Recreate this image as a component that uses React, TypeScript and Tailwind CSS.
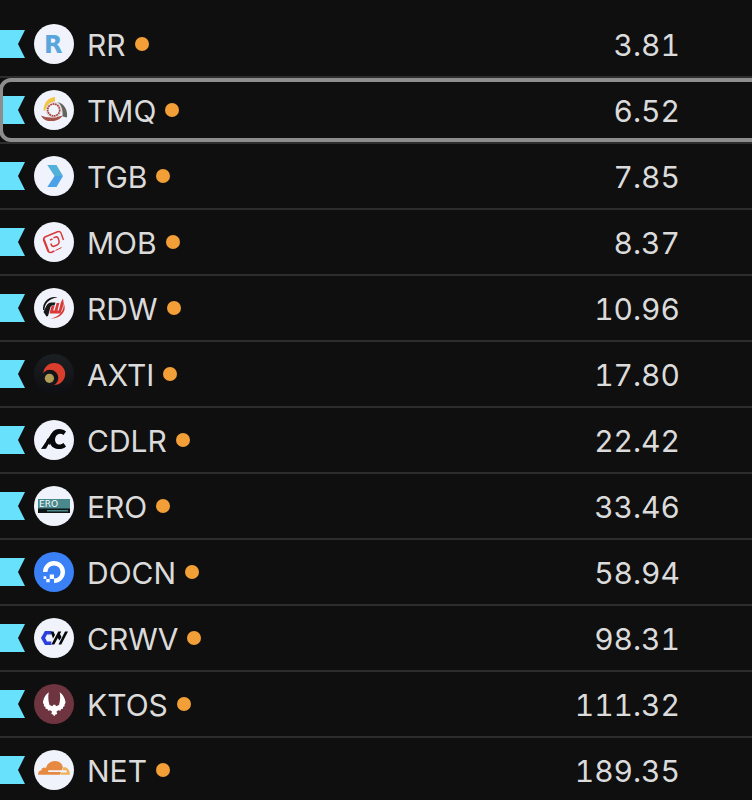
import React from "react";
import { clsx } from "clsx";

interface Stock {
  symbol: string;
  price: string;
  badge: string;
  logo: React.ReactNode;
}

// Artwork for each company, drawn on a 40x40 canvas
const stocks: Stock[] = [
  {
    symbol: "RR",
    price: "3.81",
    badge: "bg-[#f0f3fb]",
    logo: (
      <text x="10" y="29" fontSize="24" fontWeight="700" fill="#5aa5dc" fontFamily="DejaVu Sans, sans-serif">
        R
      </text>
    ),
  },
  {
    symbol: "TMQ",
    price: "6.52",
    badge: "bg-[#f0f3fb]",
    logo: (
      <>
        <path d="M9.5 21C9.5 13 14 7.5 21 7V11.5C16 12 13 15 11.5 20Z" fill="#f3c544" />
        <path d="M23.5 12C29.5 13.5 34 19 33 27.5L28.5 26.5C29 20 27.5 15 23.5 12Z" fill="#65655f" />
        <path d="M7 25.5C12 28 22 28 28.5 25.5C26 30 21 31.5 16 31C12 31 8.5 29 7 25.5Z" fill="#a5524a" />
        <circle cx="19.7" cy="20" r="6" fill="#f0f3fb" stroke="#a8483f" strokeWidth="1.8" strokeDasharray="1.8 0.6" />
        <circle cx="19.7" cy="20" r="7.6" fill="none" stroke="#d9c3c4" strokeWidth="0.7" />
      </>
    ),
  },
  {
    symbol: "TGB",
    price: "7.85",
    badge: "bg-[#f0f3fb]",
    logo: (
      <>
        <path d="M13.3 9H22.5L29 20H20.5Z" fill="#52b1d8" />
        <path d="M20.5 20H29L22.5 31H13.3Z" fill="#4ba2e6" />
      </>
    ),
  },
  {
    symbol: "MOB",
    price: "8.37",
    badge: "bg-[#f0f3fb]",
    logo: (
      <g fill="none" stroke="#da3a3a" strokeWidth="1.5">
        <path d="M29.5 18L27 11Q26 9 23.5 9.7L11.5 14.8Q9 16 9.8 18.5L14 29Q15 31 17.5 30.2L20.5 29" />
        <path d="M10 17.5L14.5 29.5" strokeWidth="2" />
        <path d="M21.5 28.5L27.5 25.5" strokeWidth="1" />
        <path d="M19.5 15.8L22.5 14.8Q24 15 24.8 18Q26 21.5 23 23L19.5 24.5Q17.8 24.5 16.8 21.5" />
        <path d="M16 18L18.5 17" />
      </g>
    ),
  },
  {
    symbol: "RDW",
    price: "10.96",
    badge: "bg-[#f0f3fb]",
    logo: (
      <>
        <path d="M23.5 9.2C15 7.5 8.5 13.5 9 22L10.5 22C10.5 15.5 15 10.5 23.5 9.2Z" fill="#17181a" />
        <path d="M9.5 24L12 18.5Q13.8 14.5 17.5 14.5H21.5L20.5 17.5H18.3Q17 17.5 16.5 19L14 28L12.5 28.5Z" fill="#17181a" />
        <path d="M30 16C33 23 27 31 16 30.5C24 29.5 29 25 30 16Z" fill="#d93a37" />
        <path d="M17.5 18H20.5L19.2 22.5H20.6L22.6 15H25.4L23.4 22.5H24.8L27 14L29 10.5L29.8 16L26.5 25.5H15.5Z" fill="#d93a37" />
      </>
    ),
  },
  {
    symbol: "AXTI",
    price: "17.80",
    badge: "bg-linear-to-b from-[#1b2023] to-[#0e0e13]",
    logo: (
      <>
        <circle cx="20.2" cy="20" r="11" fill="#d93e2c" />
        <circle cx="16" cy="24" r="8.3" fill="#131519" />
        <circle cx="15.4" cy="24.3" r="4.6" fill="#b09d56" />
      </>
    ),
  },
  {
    symbol: "CDLR",
    price: "22.42",
    badge: "bg-[#f0f3fb]",
    logo: (
      <>
        <path d="M7 29L15.5 16.5C18 12 20.5 9 25 9C28 9 30.5 10 32 11.5L29.5 15C27 13 24 13.5 22.3 15.8C20 19 21 24 24.5 24.5C26.5 24.7 28.5 24 29.5 23L32 26.5C30 28.5 27 29.2 24 29C18.5 28.5 16 25 16 21.5L12 28.8Z" fill="#08090b" />
        <path d="M13.5 18.5L17.5 21.5L16 25L12 22Z" fill="#08090b" />
      </>
    ),
  },
  {
    symbol: "ERO",
    price: "33.46",
    badge: "bg-[#f0f3fb]",
    logo: (
      <>
        <path d="M4 13H36V23H4Z" fill="#49898e" />
        <path d="M4 22.5H36V27H4Z" fill="#101516" />
        <path d="M13 24H34V25.5H13Z" fill="#49898e" />
        <text x="5" y="21" fontSize="9" fill="#f4fbfb" fontFamily="DejaVu Sans, sans-serif">
          ERO
        </text>
      </>
    ),
  },
  {
    symbol: "DOCN",
    price: "58.94",
    badge: "bg-[#3a80f6]",
    logo: (
      <>
        <path d="M11.2 20A8.8 8.8 0 1 1 20 28.8" fill="none" stroke="#fff" strokeWidth="4.4" />
        <path d="M15.7 22.6H20V27H15.7ZM12.3 27H15.7V30.2H12.3ZM9.6 24.3H12.3V27H9.6Z" fill="#fff" />
      </>
    ),
  },
  {
    symbol: "CRWV",
    price: "98.31",
    badge: "bg-[#f0f3fb]",
    logo: (
      <>
        <path d="M17.3 14.7H12L9 20L12 25.3H17.3" fill="none" stroke="#2b3fe0" strokeWidth="3.6" />
        <path d="M16.5 13.5H19.5L21 17L19 20.5ZM23 19L25 14L27.5 19L25.5 22.5Z" fill="#08090b" />
        <path d="M17.3 26.5L24.3 13.5H27.3L20.3 26.5ZM24.5 26.5L31 13.5H34L27.3 26.5Z" fill="#08090b" />
      </>
    ),
  },
  {
    symbol: "KTOS",
    price: "111.32",
    badge: "bg-[#6e3440]",
    logo: (
      <path
        d="M14.8 8.3C11.5 10.5 9 15 9 19L10 20.5L9.8 22L11.5 23L11.5 24.7L13.5 25L14 26.7L16 26.3L18 27.5L17.3 30L19 30.5L20.2 32.3L21.5 30.5L23.2 30L22.5 27.5L24.5 26.3L26.5 26.7L27 25L29 24.7L29 23L30.7 22L30.5 20.5L31.5 19C31.5 15 29 10.5 25.7 8.3C26.5 12 26.3 17 25 21L22 22.3L21.3 20.8H19.2L18.5 22.3L15.5 21C14.2 17 14 12 14.8 8.3Z"
        fill="#fff"
      />
    ),
  },
  {
    symbol: "NET",
    price: "189.35",
    badge: "bg-[#f0f3fb]",
    logo: (
      <>
        <path d="M4 24.7C4 21.5 6 20.3 7.5 20.2C7.5 17.8 10 16.8 12 18C13 13.5 17 11 21 11C25.5 11 28.5 14 28.8 17.5L27.8 20.2H14.5Q13.5 21 14.5 22H27L26 24.7Z" fill="#e68a41" />
        <path d="M29.5 17C33.5 17 36 20.5 36 24.7H26.6L27.3 22.5H32.5Q33.5 21.3 32 20.3H28.5Z" fill="#efb05a" />
      </>
    ),
  },
];

const selectedSymbol = "TMQ";

const Flag = () => (
  <svg viewBox="0 0 25 28" className="h-7 w-[25px] shrink-0" aria-hidden="true">
    <path d="M0 0H25L18 14L25 28H0Z" fill="#68e2fc" />
  </svg>
);

const StockRow: React.FC<{ stock: Stock; selected: boolean }> = ({ stock, selected }) => (
  <tr className="relative">
    <th scope="row" className="h-[66px] border-b-2 border-[#2d2d2d] p-0 text-left font-normal">
      <div className="flex items-center">
        <Flag />
        <span className={clsx("ml-[9px] size-10 shrink-0 overflow-hidden rounded-full", stock.badge)}>
          <svg viewBox="0 0 40 40" className="size-10" aria-hidden="true">
            {stock.logo}
          </svg>
        </span>
        <span className="ml-[13px] pt-0.5">{stock.symbol}</span>
        <span className="ml-[9px] size-3.5 rounded-full bg-[#f29f38]" />
      </div>
      {/* Outline of the selected row, running off the right edge */}
      {selected && (
        <div className="pointer-events-none absolute -right-4 -left-px top-0 bottom-0.5 rounded-xl border-4 border-[#8d8d8d]" />
      )}
    </th>
    <td className="border-b-2 border-[#2d2d2d] p-0 pt-0.5 pr-[72px] text-right tabular-nums">{stock.price}</td>
  </tr>
);

export default function App() {
  return (
    <main className="h-screen overflow-hidden bg-[#0f0f0f] pt-3 font-['Inter',sans-serif] text-[30px] leading-9 text-[#dbdbdb]">
      <table className="w-full border-separate border-spacing-0" aria-label="Watchlist">
        <tbody>
          {stocks.map((stock) => (
            <StockRow key={stock.symbol} stock={stock} selected={stock.symbol === selectedSymbol} />
          ))}
        </tbody>
      </table>
    </main>
  );
}
